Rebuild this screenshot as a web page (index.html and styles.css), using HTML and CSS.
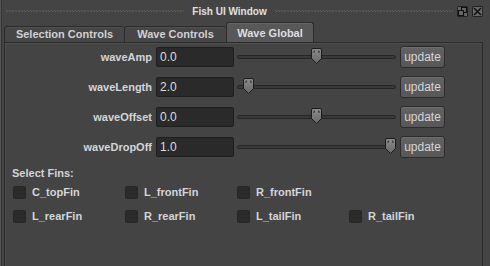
FILE: index.html
```html
<!DOCTYPE html>
<html lang="en">
<head>
<meta charset="UTF-8">
<title>Fish UI Window</title>
<link rel="stylesheet" href="styles.css">
</head>
<body>
<div class="window">

  <!-- title bar -->
  <div class="titlebar">
    <span class="grip"></span>
    <span class="title">Fish UI Window</span>
    <span class="grip"></span>
    <div class="wbtns">
      <span class="wbtn"><svg width="9" height="9" viewBox="0 0 9 9"><path d="M3.5 .5h5v5h-5z" fill="none" stroke="#111" stroke-width="1.2"/><rect x="1" y="4" width="4" height="4" fill="#686868"/><path d="M.5 3.5h5v5h-5z" fill="none" stroke="#111" stroke-width="1.2"/></svg></span>
      <span class="wbtn"><svg width="9" height="9" viewBox="0 0 9 9"><path d="M1 1l7 7M8 1l-7 7" stroke="#111" stroke-width="1.6"/></svg></span>
    </div>
  </div>

  <!-- tabs -->
  <div class="tabs">
    <div class="tab t1">Selection Controls</div>
    <div class="tab t2">Wave Controls</div>
    <div class="tab t3 active">Wave Global</div>
  </div>

  <div class="panel">
    <div class="params">
      <div class="param">
        <label>waveAmp</label><div class="field">0.0</div>
        <div class="slider"><div class="track"></div><svg class="thumb" style="--p:.48" width="11" height="16" viewBox="0 0 11 16"><use href="#thumb"/></svg></div>
        <button>update</button>
      </div>
      <div class="param">
        <label>waveLength</label><div class="field">2.0</div>
        <div class="slider"><div class="track"></div><svg class="thumb" style="--p:0" width="11" height="16" viewBox="0 0 11 16"><use href="#thumb"/></svg></div>
        <button>update</button>
      </div>
      <div class="param">
        <label>waveOffset</label><div class="field">0.0</div>
        <div class="slider"><div class="track"></div><svg class="thumb" style="--p:.48" width="11" height="16" viewBox="0 0 11 16"><use href="#thumb"/></svg></div>
        <button>update</button>
      </div>
      <div class="param">
        <label>waveDropOff</label><div class="field">1.0</div>
        <div class="slider"><div class="track"></div><svg class="thumb" style="--p:1" width="11" height="16" viewBox="0 0 11 16"><use href="#thumb"/></svg></div>
        <button>update</button>
      </div>
    </div>

    <div class="fins">
      <div class="fins-title">Select Fins:</div>
      <div class="fin-grid">
        <label class="fin"><span class="box"></span>C_topFin</label>
        <label class="fin"><span class="box"></span>L_frontFin</label>
        <label class="fin"><span class="box"></span>R_frontFin</label>
        <span></span>
        <label class="fin"><span class="box"></span>L_rearFin</label>
        <label class="fin"><span class="box"></span>R_rearFin</label>
        <label class="fin"><span class="box"></span>L_tailFin</label>
        <label class="fin"><span class="box"></span>R_tailFin</label>
      </div>
    </div>
  </div>
</div>

<svg width="0" height="0" class="defs">
  <defs>
    <linearGradient id="tg" x1="0" y1="0" x2="0" y2="1"><stop offset="0" stop-color="#8c8c8c"/><stop offset="1" stop-color="#686868"/></linearGradient>
    <g id="thumb">
      <path d="M2 .5h7a1.5 1.5 0 0 1 1.5 1.5v8.5l-5 5-5-5v-8.5a1.5 1.5 0 0 1 1.5-1.5z" fill="url(#tg)" stroke="#1b1b1b"/>
      <path d="M3 3v2M8 3v2M3 3h1M8 3h-1" stroke="#2e2e2e"/>
    </g>
  </defs>
</svg>
</body>
</html>
```
FILE: styles.css
```css
*{box-sizing:border-box;margin:0;padding:0}
html,body{height:100%}
body{background:#444;font-family:'Liberation Sans',Arial,sans-serif;color:#d3d5d9;overflow:hidden}
.defs{position:absolute}

.window{width:490px;height:266px;display:flex;flex-direction:column;background:#444;
  box-shadow:inset 1px 0 0 #555,inset 2px 0 0 #333}

/* ---------- title bar ---------- */
.titlebar{height:22px;flex:none;display:flex;align-items:center;padding:0 7px 0 6px}
.grip{flex:1;height:2px;
  background-image:repeating-linear-gradient(90deg,#626262 0 1px,transparent 1px 3px),
    repeating-linear-gradient(90deg,transparent 0 1px,#626262 1px 2px,transparent 2px 3px);
  background-size:100% 1px;background-position:0 0,0 1px;background-repeat:no-repeat}
.title{margin:0 8px;font-size:10px;font-weight:700;color:#e0e0e0}
.wbtns{display:flex;gap:4px;margin-left:4px}
.wbtn{width:11px;height:11px;border:1px solid #222;background:#686868;border-radius:1px;
  display:flex;align-items:center;justify-content:center}

/* ---------- tabs ---------- */
.tabs{height:20px;flex:none;display:flex;align-items:flex-end;padding-left:4px}
.tab{height:16px;line-height:15px;text-align:center;font-size:11px;font-weight:700;color:#cfd1d5;
  background:#464646;border:1px solid #2b2b2b;border-bottom:none;border-right:none;border-radius:3px 3px 0 0;
  box-shadow:inset 0 1px 0 #505050}
.t1{width:120px}
.t2{width:102px}
.t3{width:88px;border-right:1px solid #2b2b2b}
.tab.active{height:20px;line-height:20px;background:#585858;color:#dcdee2;box-shadow:inset 0 1px 0 #666}

/* ---------- panel ---------- */
.panel{flex:1;margin:0 7px 0 4px;border:1px solid #2b2b2b;border-bottom:none;background:#444;
  box-shadow:inset 1px 1px 0 #4e4e4e}
.params{margin-top:-1px}
.param{height:30px;display:flex;align-items:center}
.param label{width:147px;text-align:right;font-size:11px;font-weight:700}
.field{width:78px;height:20px;margin-left:4px;padding-left:3px;line-height:19px;font-size:12px;color:#dcdcdc;
  background:#2a2a2a;border:1px solid #1e1e1e;border-radius:2px}
.slider{position:relative;width:159px;height:16px;margin-left:3px;display:flex;align-items:center}
.track{flex:1;height:4px;background:#3a3a3a;border:1px solid #262626;border-radius:2px}
.thumb{position:absolute;top:-1px;left:calc(6px + var(--p) * (100% - 17px))}
button{width:45px;height:22px;margin-left:4px;font:12px 'Liberation Sans',Arial,sans-serif;color:#d4d6da;
  background:linear-gradient(#636363,#575757);border:1px solid #2c2c2c;border-radius:3px;box-shadow:inset 0 1px 0 #6e6e6e}

/* ---------- fins ---------- */
.fins{padding:4px 0 0 7px}
.fins-title{height:14px;line-height:14px;font-size:11px;font-weight:700}
.fin-grid{display:grid;grid-template-columns:repeat(4,112px);grid-auto-rows:24px;padding-left:1px}
.fin{display:flex;align-items:center;gap:6px;font-size:11px;font-weight:700}
.box{width:13px;height:13px;background:#2b2b2b;border:1px solid #262626;border-radius:2px}
```
